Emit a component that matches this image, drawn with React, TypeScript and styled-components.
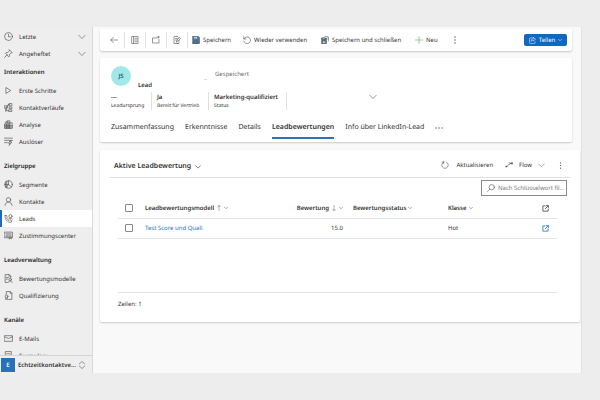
import React from "react";
import styled, { createGlobalStyle, css } from "styled-components";

const GlobalStyle = createGlobalStyle`
  *, *::before, *::after { box-sizing: border-box; }
  html, body { margin: 0; background: #ededed; }
  body {
    font-family: "Noto Sans", "Open Sans", sans-serif;
    font-size: 6px;
    line-height: 8px;
    color: #323130;
    text-rendering: geometricPrecision;
  }
  button, input { font: inherit; color: inherit; text-rendering: inherit; }
  button { background: none; border: 0; padding: 0; }
`;

const Frame = styled.div`
  display: flex;
  height: 100vh;
  padding: 27px 18px 27px 0;
`;

const Svg = styled.svg<{ $size?: number; $color?: string; $weight?: number }>`
  display: block;
  flex: none;
  width: ${(p) => p.$size ?? 8}px;
  height: ${(p) => p.$size ?? 8}px;
  fill: none;
  stroke: ${(p) => p.$color ?? "#555"};
  stroke-width: ${(p) => p.$weight ?? 1.2};
  stroke-linecap: round;
  stroke-linejoin: round;
`;

const paths: Record<string, React.ReactNode> = {
  clock: <><circle cx="8" cy="8" r="7" /><path d="M8 4v4.500h3.500" /></>,
  pin: <path d="M9.500 1.500l5 5-2 .5-3 3 .2 2.800-1.200 1.200L2.500 7.500l1.200-1.200 2.800.2 3-3zM5.500 10.500L1 15" />,
  play: <path d="M4 3l8 5-8 5z" />,
  journey: <path d="M1 5h4v4H1zM5 7l3-5h2M3 9v4l5 1M10 1h4v4h-4zM10 7h4v3h-4zM9 12h5v3H9zM3 15L8 3" />,
  analysis: <path d="M1.500 7h3v8h-3zM4.500 4h3v11h-3zM7.500 1.500h3V15h-3zM10.500 5h4v10h-4zM1 10h14M1 12.500h14M2 4.500l4-3" />,
  trigger: <path d="M1 2h14M1 6h14M1 10h5M11 6l-3 5h3l-2 4 5-6h-3l2-3" />,
  segment: <><circle cx="8" cy="8" r="6.800" /><path d="M8 1.200V8l5 4.500M8 8H1.500M5 2v12M3 4v8M8 8l-4 5" /></>,
  person: <><circle cx="8" cy="5" r="3.900" /><path d="M1.800 15c.4-4 2.800-6 6.200-6s5.800 2 6.200 6" /></>,
  lead: <><path d="M2 3l2-1 2 3.500L4.500 7c1 2.200 2.500 3.700 4.500 4.500L10.500 10l3.500 2-1 2.500c-6 1.500-12.500-5-11-11.500z" /><circle cx="11.500" cy="4" r="2.800" /><path d="M8 8.500c1-1.500 5.500-1.500 7 .5" /></>,
  consent: <path d="M1 2h14v10H1zM3.500 5h9M3.500 7.500h9M3.500 10h4M10 10h3v4l-1.500-1-1.500 1z" />,
  model: <><path d="M6 15H2V1h7l3 3v3M9 1v3h3M4 6h4M4 9h3" /><circle cx="11" cy="10" r="2.200" /><path d="M7.500 15c.5-2 1.800-2.800 3.500-2.800s3 .8 3.500 2.800" /></>,
  qualify: <><path d="M4 6V1h7l3 3v11H8M11 1v3h3" /><circle cx="4.500" cy="9.500" r="2.500" /><path d="M3 12v3.500l1.500-1 1.500 1V12" /></>,
  mail: <path d="M1 3h14v10H1zM1 5l7 3 7-3" />,
  form: <path d="M3 1h10v14H3zM5 5h6M5 8h6" />,
  down: <path d="M1.500 4.500L8 11l6.500-6.500" />,
  updown: <path d="M2.500 6L8 1l5.500 5M2.500 10L8 15l5.500-5" />,
  back: <path d="M15 8H1.500M7 2.500L1.500 8 7 13.500" />,
  page: <path d="M2 1h12v14H2zM5 1v14M7.500 4.500H12M7.500 8H12M7.500 11.500H12" />,
  popout: <path d="M10 4H1v10h13V7M10 2h5M13 0v4" />,
  edit: <path d="M9 15H2V1h8l2 2M5 5h4M5 8h3M7 12l1-4 5-5 2 2-5 5zM12 9v6H9" />,
  save: <><path d="M1 1h12l2 2v12H1z" fill="#617888" /><path d="M4 1h7v5H4z" fill="#a8cdec" stroke="#47749a" /><path d="M4 10h8v5H4z" fill="#3e7eb8" stroke="#355675" /></>,
  saveClose: <><path d="M1 4h10v11H1z" fill="#617888" /><path d="M3 4h5v3H3z" fill="#9ec8eb" /><path d="M3.500 10h5v5h-5z" fill="#d0dde7" /><path d="M8 1h6v6M15 3v7" stroke="#397fb7" /></>,
  undo: <path d="M1.500 1.500V6H6M2 5.500A6.800 6.800 0 1 1 1.500 10" />,
  plus: <path d="M8 1v14M1 8h14" />,
  more: <g fill="#555" stroke="none"><circle cx="8" cy="2" r="1.400" /><circle cx="8" cy="8" r="1.400" /><circle cx="8" cy="14" r="1.400" /></g>,
  dots: <g fill="#555" stroke="none"><circle cx="2" cy="8" r="1.400" /><circle cx="8" cy="8" r="1.400" /><circle cx="14" cy="8" r="1.400" /></g>,
  share: <path d="M7 2H3.500C2 2 1 3 1 4.500v8C1 14 2 15 3.500 15h8c1.500 0 2.500-1 2.500-2.500V11M10 1l5 4-5 4V7c-3 0-4 1-5 3 0-4 2-6.500 5-7z" />,
  refresh: <path d="M5.500 2A6.500 6.500 0 1 0 10.500 2M5.500 2H2M5.500 2v3.500" />,
  flow: <><path d="M3 11c4 0 3-6 8-6M9 3l2 2-2 2" /><circle cx="2.500" cy="11" r="1.200" fill="#555" /><path d="M12.500 3.500h2.500v2.500h-2.500z" fill="#555" /></>,
  search: <><circle cx="9.500" cy="6.500" r="5.300" /><path d="M5.700 10.300L1 15" /></>,
  up: <path d="M8 15V1M4.500 4.500L8 1l3.500 3.500" />,
  downArrow: <path d="M8 1v14M4.500 11.500L8 15l3.500-3.500" />,
  open: <path d="M6.500 2H2v12h12V9.500M9.500 1.500h5v5M14.500 1.500L7.500 8.500" />,
};

type IconProps = { name: string; size?: number; color?: string; weight?: number };
const Icon = ({ name, size, color, weight }: IconProps) => (
  <Svg viewBox="0 0 16 16" aria-hidden="true" $size={size} $color={color} $weight={weight}>
    {paths[name]}
  </Svg>
);

/* Navigation */

const Sidebar = styled.nav`
  display: flex;
  flex-direction: column;
  flex: none;
  width: 93px;
  border-right: 1px solid #d9d9d9;
  background: #eeeeee;
`;

const NavScroll = styled.div`
  flex: 1;
  min-height: 0;
  padding-top: 1px;
  overflow: hidden;
`;

const NavGroup = styled.section`
  margin-bottom: 6px;
  &:first-child { margin-bottom: 0; }
`;

const NavTitle = styled.h2`
  margin: 0;
  padding-left: 4px;
  font-size: 6px;
  font-weight: 600;
  line-height: 20px;
  color: #252423;
`;

const navRow = css`
  display: flex;
  align-items: center;
  gap: 6px;
  width: 100%;
  height: 17px;
  padding: 0 6px 0 4px;
  text-align: left;
  white-space: nowrap;
`;

const NavLink = styled.a<{ $active?: boolean }>`
  ${navRow}
  color: #323130;
  text-decoration: none;
  ${(p) => p.$active && css`
    background: #fff;
    box-shadow: inset 2px 0 #2068bd;
  `}
`;

const NavToggle = styled.button`
  ${navRow}
`;

const NavText = styled.span`
  flex: 1;
`;

const AreaSwitch = styled.button`
  display: flex;
  align-items: center;
  flex: none;
  gap: 3px;
  height: 18px;
  padding: 0 6px 0 1px;
  border-top: 1px solid #d4d4d4;
  font-weight: 600;
  text-align: left;
`;

const AreaBadge = styled.span`
  flex: none;
  width: 14px;
  background: #2672b8;
  color: #fff;
  line-height: 14px;
  text-align: center;
`;

const AreaName = styled.span`
  flex: 1;
  min-width: 0;
  margin-right: -3px;
  overflow: hidden;
  text-overflow: ellipsis;
  white-space: nowrap;
`;

/* Main area */

const Main = styled.main`
  flex: 1;
  min-width: 0;
  padding: 2px 1px 0 7px;
  border-right: 1px solid #e2e2e2;
  background: #f9f9f9;
`;

const Card = styled.section`
  border-radius: 2px;
  background: #fff;
  box-shadow: 0 1px 2px rgba(0, 0, 0, 0.2);
`;

const CommandBar = styled(Card)`
  display: flex;
  align-items: center;
  height: 22px;
  margin: 0 8px 7px 0;
  padding: 0 5px 0 4px;
`;

const IconCommand = styled.button`
  display: flex;
  align-items: center;
  justify-content: center;
  width: 21px;
  height: 16px;
  border-right: 1px solid #e2e2e2;
`;

const Command = styled.button<{ $width: number }>`
  display: flex;
  align-items: center;
  gap: 3px;
  flex: none;
  width: ${(p) => p.$width}px;
  height: 16px;
  white-space: nowrap;
`;

const Commands = styled.div`
  display: flex;
  flex: 1;
  padding-left: 4px;
`;

const ShareButton = styled.button`
  display: flex;
  align-items: center;
  justify-content: center;
  gap: 3px;
  width: 43px;
  height: 12px;
  border-radius: 2px;
  background: #1068bf;
  color: #fff;
`;

const RecordCard = styled(Card)`
  height: 84px;
  margin: 0 8px 8px 0;
  padding: 8px 11px 0;
`;

const Identity = styled.header`
  display: flex;
  height: 26px;
`;

const Avatar = styled.span`
  width: 20px;
  height: 20px;
  margin-right: 7px;
  border-radius: 50%;
  background: #a2e7ea;
  color: #146468;
  font-weight: 600;
  line-height: 20px;
  text-align: center;
`;

const RecordType = styled.h1`
  align-self: flex-end;
  width: 66px;
  margin: 0;
  padding-bottom: 3px;
  font-size: 6px;
  font-weight: 600;
  line-height: 8px;
`;

const NameEnd = styled.span`
  width: 3px;
  height: 14px;
  margin-right: 8px;
  border-bottom: 1px solid #ddd;
`;

const SaveState = styled.span`
  padding-top: 4px;
  color: #6b6b6b;
`;

const Facts = styled.dl`
  display: flex;
  height: 18px;
  margin: 0;
`;

const Fact = styled.div<{ $width: number }>`
  display: flex;
  flex-direction: column-reverse;
  flex: none;
  width: ${(p) => p.$width}px;
  margin-right: 5px;
  border-right: 1px solid #e0e0e0;
  white-space: nowrap;
`;

const FactLabel = styled.dt`
  font-size: 5px;
`;

const FactValue = styled.dd`
  margin: 0;
  font-weight: 600;
  line-height: 10px;
`;

const ExpandButton = styled.button`
  display: flex;
  align-items: flex-start;
  margin-left: 77px;
  padding-top: 1px;
`;

const Tabs = styled.div`
  display: flex;
  gap: 11px;
  margin-top: 12px;
`;

const Tab = styled.button<{ $active?: boolean }>`
  height: 17px;
  padding-bottom: 3px;
  border-bottom: 2px solid ${(p) => (p.$active ? "#2a72c6" : "transparent")};
  font-size: 7px;
  font-weight: ${(p) => (p.$active ? 600 : 400)};
  white-space: nowrap;
`;

const GridCard = styled(Card)`
  padding: 3px 9px 0;
  height: 172px;
`;

const GridHeader = styled.header`
  display: flex;
  align-items: center;
  height: 25px;
  padding: 0 7px 0 5px;
  border-bottom: 1px solid #e2e2e2;
`;

const ViewButton = styled.button`
  display: flex;
  align-items: center;
  gap: 4px;
  margin-right: auto;
  padding-top: 3px;
  font-size: 7px;
  font-weight: 600;
`;

const GridAction = styled.button<{ $gap: number }>`
  display: flex;
  align-items: center;
  gap: ${(p) => p.$gap}px;
  margin-left: 12px;
`;

const SearchBox = styled.label`
  display: flex;
  align-items: center;
  gap: 3px;
  width: 86px;
  height: 16px;
  margin: 2px 4px 2px auto;
  padding-left: 5px;
  border: 1px solid #8a8a8a;
`;

const SearchInput = styled.input`
  flex: 1;
  min-width: 0;
  padding: 0;
  border: 0;
  outline: 0;
  background: none;
  text-overflow: ellipsis;
  &::placeholder { color: #777; opacity: 1; }
`;

const TableArea = styled.div`
  height: 95px;
  margin: 0 14px 0 9px;
  border-bottom: 1px solid #e2e2e2;
`;

const Table = styled.table`
  width: 100%;
  border-collapse: collapse;
  table-layout: fixed;
`;

const Col = styled.col<{ $width?: number }>`
  width: ${(p) => (p.$width ? `${p.$width}px` : "auto")};
`;

const cell = css<{ $end?: boolean }>`
  height: 20px;
  padding: 0;
  border-bottom: 1px solid #e5e5e5;
  text-align: ${(p) => (p.$end ? "right" : "left")};
  white-space: nowrap;
`;

const Th = styled.th<{ $end?: boolean }>`
  ${cell}
  font-weight: 600;
`;

const Td = styled.td<{ $end?: boolean }>`
  ${cell}
`;

const SortButton = styled.button`
  display: inline-flex;
  align-items: center;
  gap: 2px;
  font-weight: 600;
  vertical-align: middle;
`;

const Check = styled.input`
  display: block;
  appearance: none;
  width: 8px;
  height: 8px;
  margin: 0 0 0 7px;
  border: 1px solid #888;
  border-radius: 1px;
  background: #fff;
`;

const RecordLink = styled.a`
  color: #2474b8;
  text-decoration: none;
`;

const OpenLink = styled.a`
  display: inline-block;
  vertical-align: middle;
`;

const RowCount = styled.footer`
  padding: 7px 9px;
`;

type Entry = { label: string; icon: string; active?: boolean };
const groups: { title: string; items: Entry[] }[] = [
  {
    title: "Interaktionen",
    items: [
      { label: "Erste Schritte", icon: "play" },
      { label: "Kontaktverläufe", icon: "journey" },
      { label: "Analyse", icon: "analysis" },
      { label: "Auslöser", icon: "trigger" },
    ],
  },
  {
    title: "Zielgruppe",
    items: [
      { label: "Segmente", icon: "segment" },
      { label: "Kontakte", icon: "person" },
      { label: "Leads", icon: "lead", active: true },
      { label: "Zustimmungscenter", icon: "consent" },
    ],
  },
  {
    title: "Leadverwaltung",
    items: [
      { label: "Bewertungsmodelle", icon: "model" },
      { label: "Qualifizierung", icon: "qualify" },
    ],
  },
  {
    title: "Kanäle",
    items: [
      { label: "E-Mails", icon: "mail" },
      { label: "Formulare", icon: "form" },
    ],
  },
];

const tabs = ["Zusammenfassung", "Erkenntnisse", "Details", "Leadbewertungen", "Info über LinkedIn-Lead"];

export default function App() {
  return (
    <>
      <GlobalStyle />
      <Frame>
        <Sidebar>
          <NavScroll>
            <NavGroup>
              <NavToggle><Icon name="clock" size={9} /><NavText>Letzte</NavText><Icon name="down" /></NavToggle>
              <NavToggle><Icon name="pin" size={9} /><NavText>Angeheftet</NavText><Icon name="down" /></NavToggle>
            </NavGroup>
            {groups.map((g) => (
              <NavGroup key={g.title}>
                <NavTitle>{g.title}</NavTitle>
                {g.items.map((i) => (
                  <NavLink key={i.label} href="#" $active={i.active}>
                    <Icon name={i.icon} size={9} />
                    <NavText>{i.label}</NavText>
                  </NavLink>
                ))}
              </NavGroup>
            ))}
          </NavScroll>
          <AreaSwitch>
            <AreaBadge>E</AreaBadge>
            <AreaName>Echtzeitkontaktverläufe</AreaName>
            <Icon name="updown" />
          </AreaSwitch>
        </Sidebar>

        <Main>
          <CommandBar>
            <IconCommand aria-label="Zurück"><Icon name="back" /></IconCommand>
            <IconCommand aria-label="Formular"><Icon name="page" /></IconCommand>
            <IconCommand aria-label="In neuem Fenster öffnen"><Icon name="popout" /></IconCommand>
            <IconCommand aria-label="Bearbeiten"><Icon name="edit" /></IconCommand>
            <Commands>
              <Command $width={51}><Icon name="save" />Speichern</Command>
              <Command $width={78}><Icon name="undo" />Wieder verwenden</Command>
              <Command $width={94}><Icon name="saveClose" />Speichern und schließen</Command>
              <Command $width={36}><Icon name="plus" color="#4db56f" />Neu</Command>
              <Command $width={8} aria-label="Weitere Befehle"><Icon name="more" /></Command>
            </Commands>
            <ShareButton><Icon name="share" size={7} color="#fff" />Teilen<Icon name="down" size={4} color="#fff" weight={2} /></ShareButton>
          </CommandBar>

          <RecordCard>
            <Identity>
              <Avatar>JS</Avatar>
              <RecordType>Lead</RecordType>
              <NameEnd />
              <SaveState>Gespeichert</SaveState>
            </Identity>
            <Facts>
              <Fact $width={41}><FactLabel>Leadursprung</FactLabel><FactValue>---</FactValue></Fact>
              <Fact $width={52}><FactLabel>Bereit für Vertrieb</FactLabel><FactValue>Ja</FactValue></Fact>
              <Fact $width={73}><FactLabel>Status</FactLabel><FactValue>Marketing-qualifiziert</FactValue></Fact>
              <ExpandButton aria-label="Kopfzeile erweitern"><Icon name="down" /></ExpandButton>
            </Facts>
            <Tabs role="tablist">
              {tabs.map((t) => (
                <Tab key={t} role="tab" aria-selected={t === "Leadbewertungen"} $active={t === "Leadbewertungen"}>{t}</Tab>
              ))}
              <Tab aria-label="Weitere Registerkarten"><Icon name="dots" /></Tab>
            </Tabs>
          </RecordCard>

          <GridCard>
            <GridHeader>
              <ViewButton>Aktive Leadbewertung<Icon name="down" size={6} weight={2} /></ViewButton>
              <GridAction $gap={7}><Icon name="refresh" />Aktualisieren</GridAction>
              <GridAction $gap={6}><Icon name="flow" />Flow<Icon name="down" size={7} /></GridAction>
              <GridAction $gap={0} aria-label="Weitere Aktionen"><Icon name="more" size={7} /></GridAction>
            </GridHeader>
            <SearchBox>
              <Icon name="search" />
              <SearchInput aria-label="Suche" placeholder="Nach Schlüsselwort filtern" />
            </SearchBox>
            <TableArea>
              <Table>
                <colgroup>
                  <Col $width={27} /><Col /><Col $width={60} /><Col $width={10} />
                  <Col $width={95} /><Col $width={94} /><Col $width={15} />
                </colgroup>
                <thead>
                  <tr>
                    <Th><Check type="checkbox" aria-label="Alle auswählen" /></Th>
                    <Th><SortButton>Leadbewertungsmodell<Icon name="up" size={6} /><Icon name="down" size={4} weight={2} /></SortButton></Th>
                    <Th $end><SortButton>Bewertung<Icon name="downArrow" size={6} /><Icon name="down" size={4} weight={2} /></SortButton></Th>
                    <Th />
                    <Th><SortButton>Bewertungsstatus<Icon name="down" size={4} weight={2} /></SortButton></Th>
                    <Th><SortButton>Klasse<Icon name="down" size={4} weight={2} /></SortButton></Th>
                    <Th><OpenLink href="#" aria-label="Alle öffnen"><Icon name="open" size={7} weight={2} /></OpenLink></Th>
                  </tr>
                </thead>
                <tbody>
                  <tr>
                    <Td><Check type="checkbox" aria-label="Zeile auswählen" /></Td>
                    <Td><RecordLink href="#">Test Score und Quali</RecordLink></Td>
                    <Td $end>15.0</Td>
                    <Td />
                    <Td />
                    <Td>Hot</Td>
                    <Td><OpenLink href="#" aria-label="Zeile öffnen"><Icon name="open" size={7} color="#2f80c4" weight={2} /></OpenLink></Td>
                  </tr>
                </tbody>
              </Table>
            </TableArea>
            <RowCount>Zeilen: 1</RowCount>
          </GridCard>
        </Main>
      </Frame>
    </>
  );
}
